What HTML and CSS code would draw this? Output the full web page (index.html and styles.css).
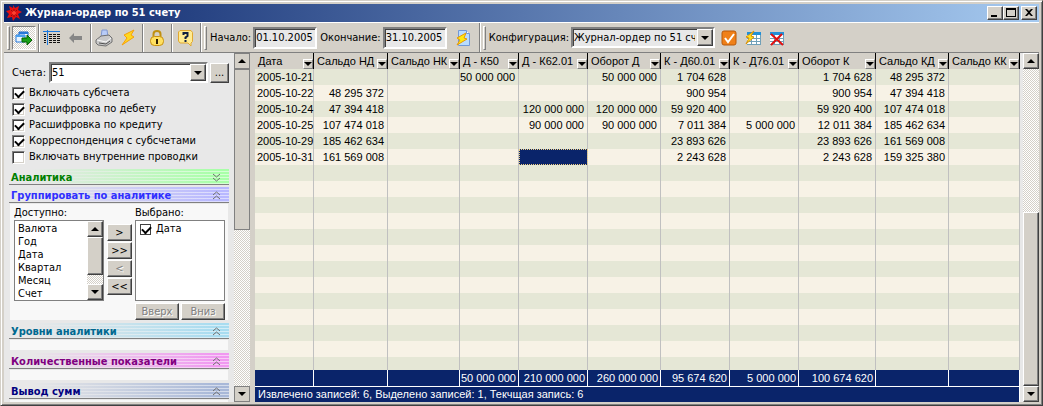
FILE: index.html
```html
<!DOCTYPE html>
<html lang="ru">
<head>
<meta charset="utf-8">
<title>Журнал-ордер по 51 счету</title>
<link rel="stylesheet" href="styles.css">
</head>
<body>
<div class="window">
  <header class="titlebar">
    <svg class="app-icon" width="16" height="16" viewBox="0 0 16 16"><path d="M7 0l2 3 4-2-1 4 4 2-4 2 2 5-4-2-3 4-1-4-5 1 2-4-3-3 4-1-1-4 4 2z" fill="#e81010"/><path d="M5 5l6 6M11 5l-6 6M8 4v8" stroke="#901010" fill="none"/><circle cx="8" cy="8" r="2" fill="#ff4030"/></svg>
    <h1 class="title">Журнал-ордер по 51 счету</h1>
    <div class="win-buttons">
      <button class="btn win-btn" aria-label="Свернуть"><svg width="12" height="10" viewBox="0 0 12 10"><path d="M2 7h6v2H2z"/></svg></button>
      <button class="btn win-btn" aria-label="Развернуть"><svg width="12" height="10" viewBox="0 0 12 10"><path d="M1 0h10v9H1zM2 2v6h8V2z" fill-rule="evenodd"/></svg></button>
      <button class="btn win-btn close" aria-label="Закрыть"><svg width="12" height="10" viewBox="0 0 12 10"><path d="M2 1h2l2 2 2-2h2L7 4.500 10 8H8L6 6 4 8H2l3-3.500z"/></svg></button>
    </div>
  </header>

  <div class="toolbars">
    <div class="bar bar-tools">
      <span class="grip"></span>
      <div class="tools">
        <button class="tool pressed" aria-label="Панель"><svg width="18" height="18" viewBox="0 0 18 18"><path d="M4 3h9v8H4z" fill="#fff" stroke="#1860c0"/><path d="M4 3h9v2H4z" fill="#2878d8"/><path d="M1 6h9v7H1z" fill="#e8f4ff" stroke="#2878d8"/><path d="M1 6h9v2H1z" fill="#48a0f0"/><path d="M7 9h5V6l5 5-5 5v-3H7z" fill="#18a018" stroke="#006000"/></svg></button>
      </div>
      <div class="tools wide">
        <button class="tool" aria-label="Таблица"><svg width="18" height="18" viewBox="0 0 18 18" shape-rendering="crispEdges"><path d="M0 2.500h17M4.500 1v15" stroke="#1878e0"/><path d="M1 5.500h2M1 7.500h2M1 9.500h2M1 11.500h2M1 13.500h2M6 5.500h3M10 5.500h3M14 5.500h3M6 7.500h3M10 7.500h3M14 7.500h3M6 9.500h3M10 9.500h3M14 9.500h3M6 11.500h3M10 11.500h3M14 11.500h3M6 13.500h3M10 13.500h3M14 13.500h3" stroke="#101010"/></svg></button>
        <button class="tool" aria-label="Назад" disabled><svg width="18" height="18" viewBox="0 0 18 18"><path d="M2 9l5-5v3h8v4H7v3z" fill="#868686"/></svg></button>
      </div>
      <div class="tools wide">
        <button class="tool" aria-label="Печать"><svg width="18" height="18" viewBox="0 0 18 18"><path d="M7 1h5l1 7H6z" fill="#b8ccf8" stroke="#8098d0"/><path d="M1 11l5-4 8-1 3 3v4l-6 4-8-1-2-2z" fill="#c8c8c8" stroke="#707070"/><path d="M2 11l9 2 5-4" fill="none" stroke="#f8f8f8"/><path d="M4 14l7 1 4-3" fill="none" stroke="#505050"/></svg></button>
        <button class="tool" aria-label="Выполнить"><svg width="18" height="18" viewBox="0 0 18 18"><path d="M15 1L5 6l3 3-5 7 12-8-3-2z" fill="#ffd820" stroke="#f8a008"/></svg></button>
      </div>
      <div class="tools">
        <button class="tool" aria-label="Блокировка"><svg width="18" height="18" viewBox="0 0 18 18"><path d="M5.500 8V5q0-3 3.500-3t3.500 3v3" fill="none" stroke="#c09010" stroke-width="2"/><rect x="2.500" y="7.500" width="13" height="9" rx="4" fill="#ffe060" stroke="#c89010"/><path d="M9 10v5M8 11h2" stroke="#302000" stroke-width="2"/></svg></button>
      </div>
      <div class="tools last">
        <button class="tool" aria-label="Справка"><svg width="18" height="18" viewBox="0 0 18 18"><path d="M3 1.500h11l1.500 2v9l-1.500 1.500v3l-3-3H3L1.500 12V3z" fill="#ffeb90" stroke="#e0a830"/><path d="M6.500 6V4h4v3L8.500 8.500V10M8.500 11v2" fill="none" stroke="#102040" stroke-width="2"/></svg></button>
      </div>
    </div>
    <div class="bar bar-dates">
      <span class="grip"></span>
      <label class="bar-label" for="from">Начало:</label>
      <input class="field date" id="from" type="text" value="01.10.2005">
      <label class="bar-label second" for="to">Окончание:</label>
      <input class="field date" id="to" type="text" value="31.10.2005">
      <button class="tool refresh" aria-label="Обновить"><svg width="18" height="18" viewBox="0 0 18 18"><path d="M4.500 1.500h8l3 3v12h-11z" fill="#b8dcff" stroke="#7098d8"/><path d="M12.500 1.500v3h3" fill="#fff" stroke="#7098d8"/><path d="M12 4L3 9l3 2-3 5 10-6-3-1z" fill="#ffe810" stroke="#e89808"/></svg></button>
    </div>
    <div class="bar bar-config">
      <span class="grip"></span>
      <label class="bar-label" for="config">Конфигурация:</label>
      <div class="combo combo-config">
        <select class="combo-select" id="config"><option>Журнал-ордер по 51 счету</option></select>
        <span class="btn combo-arrow"><i class="tri down"></i></span>
      </div>
      <button class="tool" aria-label="Применить"><svg width="18" height="18" viewBox="0 0 18 18"><rect x="2" y="2" width="14" height="14" rx="2" fill="#f08018" stroke="#b85808"/><path d="M5 9l3 4 6-8" fill="none" stroke="#fff" stroke-width="2"/></svg></button>
      <button class="tool" aria-label="Быстрая таблица"><svg width="18" height="18" viewBox="0 0 18 18" shape-rendering="crispEdges"><path d="M3 3h14v13H3z" fill="#fff"/><path d="M3 3h14v3H3z" fill="#2090d8"/><path d="M3 9.500h14M3 12.500h14M7.500 6v10M12.500 6v10M3 15.500h14M16.500 6v10" stroke="#70a0b8"/><path d="M10 2L2 8l3 1-3 6 8-7-3-1z" fill="#ffe020" stroke="#d89008" shape-rendering="auto"/></svg></button>
      <button class="tool" aria-label="Удалить таблицу"><svg width="18" height="18" viewBox="0 0 18 18" shape-rendering="crispEdges"><path d="M2 3h14v13H2z" fill="#fff"/><path d="M2 3h14v3H2z" fill="#2090d8"/><path d="M2 9.500h14M2 12.500h14M6.500 6v10M11.500 6v10M2 15.500h14M15.500 6v10" stroke="#70a0b8"/><path d="M3 5l12 11M14 5L3 16" stroke="#e01010" stroke-width="2" shape-rendering="auto"/></svg></button>
    </div>
  </div>

  <main class="content">
    <aside class="sidebar">
      <div class="options">
        <div class="accounts">
          <label for="acc">Счета:</label>
          <div class="combo combo-acc">
            <select class="combo-select" id="acc"><option>51</option></select>
            <span class="btn combo-arrow"><i class="tri down"></i></span>
          </div>
          <button class="btn more">...</button>
        </div>
        <label class="check"><input class="box" type="checkbox" checked>Включать субсчета</label>
        <label class="check"><input class="box" type="checkbox" checked>Расшифровка по дебету</label>
        <label class="check"><input class="box" type="checkbox" checked>Расшифровка по кредиту</label>
        <label class="check"><input class="box" type="checkbox" checked>Корреспонденция с субсчетами</label>
        <label class="check"><input class="box" type="checkbox">Включать внутренние проводки</label>
      </div>

      <section class="section">
        <h2 class="section-head green">Аналитика<svg width="9" height="9" viewBox="0 0 9 9"><path d="M1 1l3.500 3L8 1M1 5l3.500 3L8 5"/></svg></h2>
      </section>
      <section class="section">
        <h2 class="section-head blue">Группировать по аналитике<svg width="9" height="9" viewBox="0 0 9 9"><path d="M1 4l3.500-3L8 4M1 8l3.500-3L8 8"/></svg></h2>
        <div class="section-body picker">
          <div class="pick-col">
            <label for="avail">Доступно:</label>
            <div class="listbox">
              <select class="list" id="avail" size="6" multiple>
                <option>Валюта</option><option>Год</option><option>Дата</option><option>Квартал</option><option>Месяц</option><option>Счет</option>
              </select>
              <div class="scroll">
                <button class="btn scroll-btn" aria-label="Вверх по списку"><i class="tri up"></i></button>
                <div class="btn thumb list-thumb"></div>
                <div class="track"></div>
                <button class="btn scroll-btn" aria-label="Вниз по списку"><i class="tri down"></i></button>
              </div>
            </div>
          </div>
          <div class="movers">
            <button class="btn mover">&gt;</button>
            <button class="btn mover">&gt;&gt;</button>
            <button class="btn mover" disabled>&lt;</button>
            <button class="btn mover">&lt;&lt;</button>
          </div>
          <div class="pick-col">
            <span>Выбрано:</span>
            <div class="listbox chosen"><label class="check"><input class="box flat" type="checkbox" checked>Дата</label></div>
            <div class="order">
              <button class="btn order-btn" disabled>Вверх</button>
              <button class="btn order-btn" disabled>Вниз</button>
            </div>
          </div>
        </div>
      </section>
      <section class="section">
        <h2 class="section-head teal">Уровни аналитики<svg width="9" height="9" viewBox="0 0 9 9"><path d="M1 4l3.500-3L8 4M1 8l3.500-3L8 8"/></svg></h2>
        <div class="section-body empty"></div>
      </section>
      <section class="section">
        <h2 class="section-head purple">Количественные показатели<svg width="9" height="9" viewBox="0 0 9 9"><path d="M1 4l3.500-3L8 4M1 8l3.500-3L8 8"/></svg></h2>
        <div class="section-body empty"></div>
      </section>
      <section class="section">
        <h2 class="section-head navy">Вывод сумм<svg width="9" height="9" viewBox="0 0 9 9"><path d="M1 4l3.500-3L8 4M1 8l3.500-3L8 8"/></svg></h2>
        <div class="section-body empty"></div>
      </section>
    </aside>
    <div class="scroll side-scroll">
      <button class="scroll-btn flat-btn" aria-label="Прокрутить вверх"><i class="tri up"></i></button>
      <div class="thumb flat-btn side-thumb"></div>
      <div class="track"></div>
      <button class="scroll-btn flat-btn" aria-label="Прокрутить вниз"><i class="tri down"></i></button>
    </div>
    <div class="splitter"></div>

    <div class="report">
      <table class="grid">
        <colgroup><col class="w59"><col class="w74"><col class="w72"><col class="w59"><col class="w69"><col class="w73"><col class="w69"><col class="w69"><col class="w77"><col class="w73"><col class="w71"></colgroup>
        <thead>
          <tr>
            <th><div class="head">Дата<button class="filter" aria-label="Фильтр"><i class="tri down"></i></button></div></th>
            <th><div class="head">Сальдо НД<button class="filter" aria-label="Фильтр"><i class="tri down"></i></button></div></th>
            <th><div class="head">Сальдо НК<button class="filter" aria-label="Фильтр"><i class="tri down"></i></button></div></th>
            <th><div class="head">Д - К50<button class="filter" aria-label="Фильтр"><i class="tri down"></i></button></div></th>
            <th><div class="head">Д - К62.01<button class="filter" aria-label="Фильтр"><i class="tri down"></i></button></div></th>
            <th><div class="head">Оборот Д<button class="filter" aria-label="Фильтр"><i class="tri down"></i></button></div></th>
            <th><div class="head">К - Д60.01<button class="filter" aria-label="Фильтр"><i class="tri down"></i></button></div></th>
            <th><div class="head">К - Д76.01<button class="filter" aria-label="Фильтр"><i class="tri down"></i></button></div></th>
            <th><div class="head">Оборот К<button class="filter" aria-label="Фильтр"><i class="tri down"></i></button></div></th>
            <th><div class="head">Сальдо КД<button class="filter" aria-label="Фильтр"><i class="tri down"></i></button></div></th>
            <th><div class="head">Сальдо КК<button class="filter" aria-label="Фильтр"><i class="tri down"></i></button></div></th>
          </tr>
        </thead>
        <tbody>
          <tr><td>2005-10-21</td><td></td><td></td><td>50 000 000</td><td></td><td>50 000 000</td><td>1 704 628</td><td></td><td>1 704 628</td><td>48 295 372</td><td></td></tr>
          <tr><td>2005-10-22</td><td>48 295 372</td><td></td><td></td><td></td><td></td><td>900 954</td><td></td><td>900 954</td><td>47 394 418</td><td></td></tr>
          <tr><td>2005-10-24</td><td>47 394 418</td><td></td><td></td><td>120 000 000</td><td>120 000 000</td><td>59 920 400</td><td></td><td>59 920 400</td><td>107 474 018</td><td></td></tr>
          <tr><td>2005-10-25</td><td>107 474 018</td><td></td><td></td><td>90 000 000</td><td>90 000 000</td><td>7 011 384</td><td>5 000 000</td><td>12 011 384</td><td>185 462 634</td><td></td></tr>
          <tr><td>2005-10-29</td><td>185 462 634</td><td></td><td></td><td></td><td></td><td>23 893 626</td><td></td><td>23 893 626</td><td>161 569 008</td><td></td></tr>
          <tr><td>2005-10-31</td><td>161 569 008</td><td></td><td></td><td class="selected"></td><td></td><td>2 243 628</td><td></td><td>2 243 628</td><td>159 325 380</td><td></td></tr>
          <tr class="filler"><td></td><td></td><td></td><td></td><td></td><td></td><td></td><td></td><td></td><td></td><td></td></tr>
        </tbody>
        <tfoot>
          <tr><td></td><td></td><td></td><td>50 000 000</td><td>210 000 000</td><td>260 000 000</td><td>95 674 620</td><td>5 000 000</td><td>100 674 620</td><td></td><td></td></tr>
        </tfoot>
      </table>
      <div class="status">Извлечено записей: 6, Выделено записей: 1, Текчщая запись: 6</div>
    </div>
    <div class="scroll">
      <button class="btn scroll-btn" aria-label="Прокрутить таблицу вверх"><i class="tri up"></i></button>
      <div class="track"></div>
      <div class="btn thumb grid-thumb"></div>
      <button class="btn scroll-btn" aria-label="Прокрутить таблицу вниз"><i class="tri down"></i></button>
    </div>
  </main>
</div>
</body>
</html>
```
FILE: styles.css
```css
* { box-sizing: border-box; }
body {
  margin: 0;
  font: 11px/14px "DejaVu Sans Condensed", "DejaVu Sans", sans-serif;
  color: #000;
}
button, input, select { font: inherit; color: inherit; margin: 0; padding: 0; border-radius: 0; }
.window {
  display: flex;
  flex-direction: column;
  height: 100vh;
  padding: 3px;
  background: #d4d0c8;
  border: 1px solid;
  border-color: #d4d0c8 #404040 #404040 #d4d0c8;
  box-shadow: inset 1px 1px #fff, inset -1px -1px #808080;
}
.titlebar {
  display: flex;
  align-items: center;
  gap: 3px;
  height: 18px;
  flex: none;
  padding: 0 2px;
  background: linear-gradient(to right, #0a246a, #a6caf0);
  color: #fff;
}
.title { flex: 1; margin: 0; font-size: 11px; line-height: 16px; font-weight: bold; }
.win-buttons { display: flex; }
.btn {
  display: flex;
  align-items: center;
  justify-content: center;
  background: #d4d0c8;
  border: 1px solid;
  border-color: #fff #404040 #404040 #fff;
  box-shadow: inset -1px -1px #808080;
}
.win-btn { width: 16px; height: 14px; }
.close { margin-left: 2px; }

.toolbars { display: flex; flex: none; height: 31px; border-bottom: 1px solid #808080; border-top: 1px solid #fff; }
.bar { display: flex; align-items: center; border-right: 1px solid #808080; border-left: 1px solid #fff; }
.bar:first-child { border-left: 0; }
.bar:last-child { flex: 1; border-right: 0; }
.grip { width: 3px; height: 24px; margin: 0 2px; border: 1px solid; border-color: #fff #808080 #808080 #fff; }
.bar-tools .grip { margin-left: 3px; }
.tools { display: flex; align-items: center; height: 28px; padding: 0 2px; border-right: 1px solid #808080; box-shadow: 1px 0 #fff; }
.tools.wide { padding: 0 2px 0 1px; }
.tools.last { border: 0; box-shadow: none; }
.tools:nth-child(2) { padding-left: 0; }
.tool { display: flex; align-items: center; justify-content: center; width: 24px; height: 24px; background: none; border: 1px solid transparent; }
.pressed { background: repeating-conic-gradient(#fff 0 25%, #d4d0c8 0 50%) 0 0 / 2px 2px; border-color: #808080 #fff #fff #808080; }
.bar-label { padding: 0 2px 0 1px; }
.second { padding-left: 3px; }
.field, .combo {
  border: 2px solid;
  border-color: #808080 #fff #fff #808080;
  box-shadow: inset 1px 1px #404040;
  background: #e8e8e8;
}
.date { width: 64px; height: 22px; padding-left: 1px; }
.refresh { margin: 0 4px; }
.combo { position: relative; display: flex; height: 21px; }
.combo-select { width: 100%; appearance: none; background: none; border: 0; outline: 0; padding: 0 18px 0 1px; }
.combo-arrow { position: absolute; right: 0; top: 0; bottom: 0; width: 16px; pointer-events: none; }
.combo-config { width: 144px; margin-right: 2px; }

.tri { width: 0; height: 0; border: 4px solid transparent; }
.tri.down { border-top-color: #000; border-bottom: 0; }
.tri.up { border-bottom-color: #000; border-top: 0; }

.content { display: flex; flex: 1; min-height: 0; }
.sidebar { flex: none; width: 230px; padding: 9px 5px 0; background: #e8e8e8; overflow: hidden; }
.options { padding: 0 0 4px 3px; }
.accounts { display: flex; align-items: center; gap: 2px; padding-bottom: 2px; }
.accounts label { width: 35px; }
.combo-acc { flex: 1; background: #fff; }
.more { width: 19px; height: 20px; }
.check { display: flex; align-items: center; gap: 4px; height: 16px; }
.box {
  appearance: none;
  width: 13px;
  height: 13px;
  background: #fff;
  border: 1px solid;
  border-color: #808080 #fff #fff #808080;
  box-shadow: inset 1px 1px #404040, inset -1px -1px #d4d0c8;
}
.box:checked::after { content: ""; display: block; width: 7px; height: 4px; margin: 2px; border: solid #000; border-width: 0 0 2px 2px; transform: rotate(-45deg); }
.flat { width: 11px; height: 11px; border-color: #404040; box-shadow: none; }
.flat:checked::after { margin: 1px; }

.section { margin-bottom: 2px; }
.section-head {
  display: flex;
  align-items: center;
  justify-content: space-between;
  height: 16px;
  margin: 0;
  padding: 2px 8px 0 2px;
  border-bottom: 1px solid #808080;
  font-size: 11px;
  line-height: 13px;
  font-weight: bold;
  background: linear-gradient(to right, #e8e8e8 10%, transparent 95%), repeating-linear-gradient(transparent 0 2px, #ffffff80 2px 3px), var(--tint);
}
.section-head svg { fill: none; stroke: #707070; stroke-width: 1; }
.green { color: #008000; --tint: #a8ffa8; }
.blue { color: #3030ff; --tint: #b8b8ff; }
.teal { color: #006890; --tint: #a8dcf0; }
.purple { color: #800080; --tint: #f098f0; }
.navy { color: #000080; --tint: #a8b8d8; }
.section-body { margin: 1px 1px 3px; background: #f8f8f8; }
.empty { height: 10px; }
.picker { display: flex; justify-content: space-between; padding: 2px 3px 0 4px; }
.pick-col { display: flex; flex-direction: column; width: 90px; }
.listbox { display: flex; height: 81px; background: #fff; border: 1px solid #808080; }
.list { flex: 1; min-width: 0; height: 79px; border: 0; background: none; overflow: hidden; padding-top: 1px; outline: 0; }
.list option { height: 13px; min-height: 13px; padding: 0 3px; line-height: 13px; }
.chosen { padding: 0 4px; }
.chosen .check { gap: 5px; }
.order { display: flex; gap: 2px; padding-top: 2px; }
.order-btn { flex: 1; height: 17px; }
.btn:disabled { color: #808080; text-shadow: 1px 1px #fff; }
.movers { display: flex; flex-direction: column; gap: 1px; padding-top: 18px; }
.mover { width: 25px; height: 17px; }

.scroll { display: flex; flex-direction: column; flex: none; width: 16px; }
.scroll-btn { display: flex; align-items: center; justify-content: center; flex: none; height: 16px; }
.flat-btn { background: #d4d0c8; border: 1px solid #808080; }
.track { flex: 1; background: repeating-conic-gradient(#fff 0 25%, #d4d0c8 0 50%) 0 0 / 2px 2px; }
.list-thumb { height: 38px; }
.side-thumb { flex: 0 0 46%; }
.grid-thumb { flex: 0 0 50%; }
.splitter { width: 5px; background: #d4d0c8; }

.report { display: flex; flex-direction: column; flex: 1; min-width: 0; padding-right: 3px; background: #e8e8e8; font: 11px/14px "Liberation Sans", Arial, sans-serif; }
.grid { flex: 1; width: 100%; border-collapse: separate; border-spacing: 0; table-layout: fixed; }
.w59 { width: 59px; } .w69 { width: 69px; } .w71 { width: 71px; } .w72 { width: 72px; }
.w73 { width: 73px; } .w74 { width: 74px; } .w77 { width: 77px; }
.grid th { height: 16px; padding: 0; background: #d4d0c8; border-right: 1px solid #000; font-weight: normal; text-align: left; }
.head { display: flex; align-items: center; justify-content: space-between; height: 16px; padding-left: 3px; white-space: nowrap; }
.filter { display: flex; align-items: center; justify-content: center; align-self: flex-end; flex: none; width: 10px; height: 10px; background: #d4d0c8; border: 1px solid; border-color: #fff #808080 #808080 #fff; }
.grid td { height: 16px; padding: 0 3px 0 0; border-right: 1px solid #c0c0c0; text-align: right; white-space: nowrap; line-height: 14px; }
.grid td:first-child { padding: 0 0 0 2px; text-align: left; }
.grid tbody tr:nth-child(odd) { background: #e5e7d6; }
.grid tbody tr:nth-child(even) { background: #f7f2e6; }
.grid tbody .filler td { height: auto; background: repeating-linear-gradient(#e5e7d6 0 16px, #f7f2e6 16px 32px); }
.grid .selected { background: #0a246a; outline: 1px dotted #f0d080; outline-offset: -1px; }
.grid tfoot td { background: #0a246a; color: #fff; border-right-color: #fff; border-bottom: 1px solid #fff; height: 17px; padding-right: 2px; }
.status { flex: none; height: 15px; padding-left: 3px; background: #0a246a; color: #fff; line-height: 15px; border-right: 1px solid #fff; }
```
